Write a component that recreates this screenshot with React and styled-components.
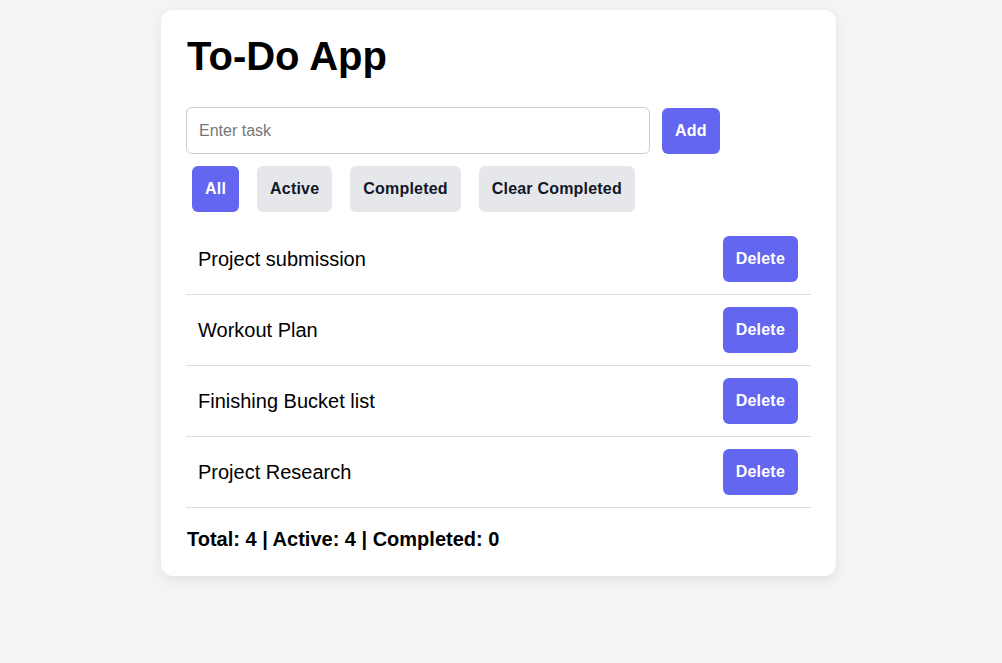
import styled, { createGlobalStyle } from "styled-components";

const GlobalStyle = createGlobalStyle`
  body {
    margin: 0;
    background: #f3f4f6;
    font-family: "Liberation Sans", Arial, sans-serif;
  }
`;

const Page = styled.div`
  display: flex;
  justify-content: center;
  padding: 10px 5px 0 0;
  min-height: 663px;
  box-sizing: border-box;
`;

const Card = styled.div`
  width: 675px;
  box-sizing: border-box;
  padding: 23px 25px 25px;
  background: #fff;
  border-radius: 12px;
  box-shadow: 0 4px 12px rgba(0, 0, 0, 0.08);
  align-self: flex-start;
`;

const Title = styled.h1`
  margin: 0 0 28px 1px;
  font-size: 40px;
  line-height: 46px;
  font-weight: 700;
  color: #000;
`;

const InputRow = styled.div`
  display: flex;
  align-items: center;
  gap: 12px;
`;

const TaskInput = styled.input`
  width: 464px;
  height: 47px;
  box-sizing: border-box;
  padding: 0 12px;
  border: 1px solid #ccc;
  border-radius: 6px;
  font-family: inherit;
  font-size: 16px;
  outline: none;

  &::placeholder {
    color: #777;
  }
`;

const Button = styled.button`
  height: 46px;
  padding: 0 13px;
  border: none;
  border-radius: 6px;
  font-family: inherit;
  font-size: 16px;
  font-weight: 700;
  letter-spacing: 0.2px;
  cursor: pointer;
  background: ${(p) => (p.$primary ? "#6366f1" : "#e5e7eb")};
  color: ${(p) => (p.$primary ? "#fff" : "#111827")};
`;

const Filters = styled.div`
  display: flex;
  gap: 18px;
  padding: 12px 0 12px 6px;
`;

const List = styled.ul`
  list-style: none;
  margin: 0;
  padding: 0;
`;

const Item = styled.li`
  display: flex;
  align-items: center;
  justify-content: space-between;
  padding: 12px 13px 12px 12px;
  border-bottom: 1px solid #ddd;
  font-size: 20px;
  color: #000;
`;

const Stats = styled.p`
  margin: 20px 0 0 1px;
  font-size: 20px;
  font-weight: 700;
  color: #000;
`;

const tasks = [
  "Project submission",
  "Workout Plan",
  "Finishing Bucket list",
  "Project Research",
];

const filters = ["All", "Active", "Completed", "Clear Completed"];

export default function App() {
  return (
    <Page>
      <GlobalStyle />
      <Card>
        <Title>To-Do App</Title>
        <InputRow>
          <TaskInput placeholder="Enter task" />
          <Button $primary>Add</Button>
        </InputRow>
        <Filters>
          {filters.map((f) => (
            <Button key={f} $primary={f === "All"}>
              {f}
            </Button>
          ))}
        </Filters>
        <List>
          {tasks.map((t) => (
            <Item key={t}>
              {t}
              <Button $primary>Delete</Button>
            </Item>
          ))}
        </List>
        <Stats>Total: 4 | Active: 4 | Completed: 0</Stats>
      </Card>
    </Page>
  );
}
